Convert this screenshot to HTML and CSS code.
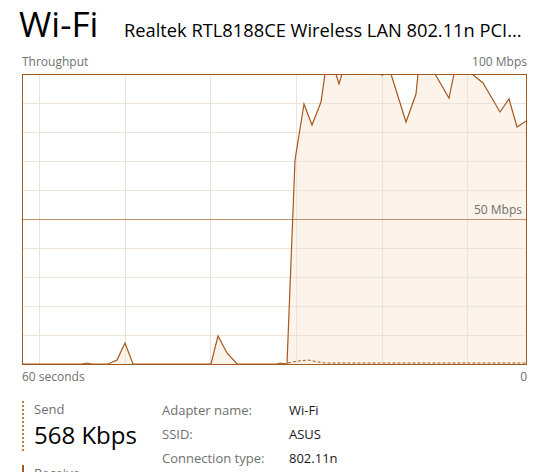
FILE: index.html
```html
<!DOCTYPE html>
<html lang="en">
<head>
    <meta charset="UTF-8">
    <title>Wi-Fi</title>
    <link rel="stylesheet" href="styles.css">
</head>
<body>
    <div class="header">
        <h1 class="title">Wi-Fi</h1>
        <div class="adapter">Realtek RTL8188CE Wireless LAN 802.11n PCI...</div>
    </div>

    <div class="chart-labels top">
        <span>Throughput</span>
        <span>100 Mbps</span>
    </div>

    <div class="chart">
        <svg width="505" height="291" viewBox="0 0 505 291">
            <defs>
                <clipPath id="area">
                    <rect x="0.5" y="0.5" width="504" height="290"></rect>
                </clipPath>
            </defs>
            <g clip-path="url(#area)">
                <rect x="0" y="0" width="505" height="291" fill="#ffffff"></rect>
                <!-- area under the receive line -->
                <polygon class="fill" points="0,290 60,290 65,289 70,290 86,290 95,286 103,269 111,290 189,290 196,262 205,279 215,290 255,290 258,289 265,290 273,86 282,30 290,51 299,28 303,0 308,-10 314,0 317,10 320,0 326,-10 340,-10 359,0 360,1.5 362,0 369,0 384,48 394,20 396,0 405,-10 413,0 427,24 432,0 440,-10 450,0 461,9 478,38 487,25 495,53 504,47 505,47 505,290"></polygon>
                <g class="grid">
                    <line x1="17.5" y1="0" x2="17.5" y2="291"></line>
                    <line x1="103.5" y1="0" x2="103.5" y2="291"></line>
                    <line x1="188.5" y1="0" x2="188.5" y2="291"></line>
                    <line x1="274.5" y1="0" x2="274.5" y2="291"></line>
                    <line x1="360.5" y1="0" x2="360.5" y2="291"></line>
                    <line x1="445.5" y1="0" x2="445.5" y2="291"></line>
                    <line x1="0" y1="29.5" x2="505" y2="29.5"></line>
                    <line x1="0" y1="58.5" x2="505" y2="58.5"></line>
                    <line x1="0" y1="87.5" x2="505" y2="87.5"></line>
                    <line x1="0" y1="116.5" x2="505" y2="116.5"></line>
                    <line x1="0" y1="174.5" x2="505" y2="174.5"></line>
                    <line x1="0" y1="203.5" x2="505" y2="203.5"></line>
                    <line x1="0" y1="232.5" x2="505" y2="232.5"></line>
                    <line x1="0" y1="261.5" x2="505" y2="261.5"></line>
                </g>
                <line class="midline" x1="0" y1="145.5" x2="505" y2="145.5"></line>
                <polyline class="send" points="266,289 276,287 286,286 296,288 304,289 504,289"></polyline>
                <polyline class="receive" points="0,290 60,290 65,289 70,290 86,290 95,286 103,269 111,290 189,290 196,262 205,279 215,290 255,290 258,289 265,290 273,86 282,30 290,51 299,28 303,0 308,-10 314,0 317,10 320,0 326,-10 340,-10 359,0 360,1.5 362,0 369,0 384,48 394,20 396,0 405,-10 413,0 427,24 432,0 440,-10 450,0 461,9 478,38 487,25 495,53 504,47 505,47"></polyline>
            </g>
            <rect class="frame" x="0.5" y="0.5" width="504" height="290"></rect>
        </svg>
        <span class="mid-label">50 Mbps</span>
    </div>

    <div class="chart-labels bottom">
        <span>60 seconds</span>
        <span>0</span>
    </div>

    <div class="details">
        <div class="rates">
            <div class="rate send-rate">
                <div class="rate-name">Send</div>
                <div class="rate-value">568 Kbps</div>
            </div>
            <div class="rate receive-rate">
                <div class="rate-name">Receive</div>
                <div class="rate-value">72.9 Mbps</div>
            </div>
        </div>
        <div class="info">
            <span class="info-label">Adapter name:</span>
            <span class="info-value">Wi-Fi</span>
            <span class="info-label">SSID:</span>
            <span class="info-value">ASUS</span>
            <span class="info-label">Connection type:</span>
            <span class="info-value">802.11n</span>
        </div>
    </div>
</body>
</html>
```

FILE: styles.css
```css
* {
    margin: 0;
    padding: 0;
    box-sizing: border-box;
}
body {
    font-family: "Open Sans", "Noto Sans", sans-serif;
    background-color: #ffffff;
    color: #000000;
    overflow: hidden;
}
.header {
    display: flex;
    align-items: baseline;
    margin-top: 4px;
    padding-left: 19px;
    height: 40px;
    white-space: nowrap;
}
.title {
    font-size: 35px;
    font-weight: 400;
    line-height: 40px;
    width: 105px;
}
.adapter {
    font-size: 18.3px;
    line-height: 40px;
}
.chart-labels {
    display: flex;
    justify-content: space-between;
    width: 505px;
    margin-left: 22px;
    font-size: 12px;
    line-height: 16px;
    color: #707070;
}
.chart-labels.top {
    margin-top: 10px;
    margin-bottom: 4px;
}
.chart-labels.bottom {
    margin-top: 4px;
}
.chart {
    position: relative;
    margin-left: 22px;
    width: 505px;
    height: 291px;
}
.chart svg {
    display: block;
}
.fill {
    fill: #fcf3ea;
}
.grid line {
    stroke: #ece2d8;
    stroke-width: 1;
}
.midline {
    stroke: #bf9267;
    stroke-width: 1;
}
.receive {
    fill: none;
    stroke: #a7581c;
    stroke-width: 1.2;
}
.send {
    fill: none;
    stroke: #a7581c;
    stroke-width: 1;
    stroke-dasharray: 3 2;
}
.frame {
    fill: none;
    stroke: #a4581b;
    stroke-width: 1;
}
.mid-label {
    position: absolute;
    right: 5px;
    top: 128px;
    font-size: 12px;
    line-height: 16px;
    color: #707070;
}
.details {
    display: flex;
    align-items: flex-start;
    margin-top: 16px;
    margin-left: 22px;
}
.rates {
    width: 140px;
}
.rate {
    padding-left: 10px;
    border-left: 2px dotted #cc7a3a;
    margin-bottom: 14px;
}
.receive-rate {
    border-left: 2px solid #a7581c;
}
.rate-name {
    font-size: 13px;
    line-height: 17px;
    color: #707070;
}
.rate-value {
    font-size: 24px;
    line-height: 33px;
    color: #000000;
}
.info {
    display: grid;
    grid-template-columns: 127px auto;
    align-content: start;
    row-gap: 6px;
    font-size: 13px;
    line-height: 18px;
    padding-top: 0;
}
.info-label {
    color: #707070;
}
.info-value {
    color: #1a1a1a;
}
```
